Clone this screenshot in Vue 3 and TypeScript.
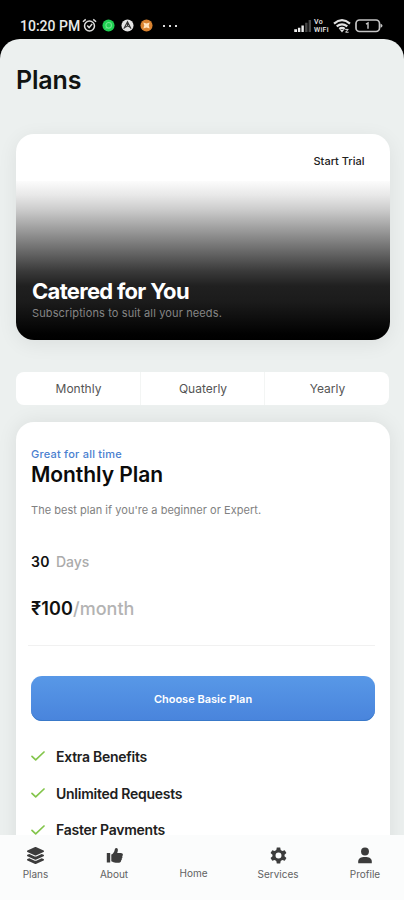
<script setup lang="ts">
const periods: string[] = ['Monthly', 'Quaterly', 'Yearly']

const benefits: string[] = ['Extra Benefits', 'Unlimited Requests', 'Faster Payments']
</script>

<template>
  <main class="phone">
    <header class="status">
      <span class="clock">10:20 PM</span>
      <svg class="alarm" viewBox="0 0 16 16" fill="none" stroke="#ddd" stroke-width="1.6">
        <circle cx="8" cy="8.6" r="5.3" />
        <path d="M1 4 4 1.4M15 4l-3-2.6M5.6 8l2 2.3 3.2-3.8" />
      </svg>
      <svg class="dot green" viewBox="0 0 14 14">
        <circle cx="7" cy="7" r="6.5" fill="#1fd052" />
        <circle cx="7.2" cy="6.8" r="3" fill="none" stroke="#6fe78f" stroke-width="1.2" />
        <path d="m3.6 10.4.8-2.6 1.7 1.8z" fill="#6fe78f" />
      </svg>
      <svg class="dot gray" viewBox="0 0 14 14">
        <circle cx="7" cy="7" r="6.5" fill="#e4e4e4" />
        <path d="M3 10.5 7 3l3.8 7.5M7 3v4.4L4.6 9M7 7.4 9.8 9" fill="none" stroke="#333" stroke-width="1.2" />
      </svg>
      <svg class="dot orange" viewBox="0 0 14 14">
        <circle cx="7" cy="7" r="6.5" fill="#d9822f" />
        <path d="m3.6 3.8 3.4 1 3.4-1-1 3.2 1 3.2-3.4-1-3.400 1 1-3.200z" fill="#ffe2bd" />
      </svg>
      <span class="more"><i></i><i></i><i></i></span>
      <svg class="signal" viewBox="0 0 19 13">
        <path d="M0 10h3v3H0zM4 8.500h2.600V13H4zM7.800 6h2.600v7H7.800z" fill="#eee" />
        <path d="M11.800 3h2.600v10h-2.600zM15.600 0h2.600v13h-2.600z" fill="#484848" />
      </svg>
      <span class="vowifi"><b>Vo</b><b>WiFi</b></span>
      <svg class="wifi" viewBox="0 0 18 14" fill="none" stroke="#e2e2e2" stroke-width="2.200">
        <path d="M1 4.600Q9-2.200 17 4.600M3.700 7.400q5.300-4.200 10.600 0M6.300 10q2.700-2 5.400 0" />
        <path d="m7 11 2 2.600 2-2.600z" fill="#e2e2e2" stroke="none" />
        <path d="M12.200 10.400h3l-2.600 2.800h3" stroke-width="1" />
      </svg>
      <svg class="battery" viewBox="0 0 28 14">
        <rect x="1" y="1" width="23.500" height="11.500" rx="3.500" fill="none" stroke="#c4c4c4" stroke-width="1.700" />
        <path d="M25.500 4.800q2 .4 2 2t-2 2z" fill="#c4c4c4" />
        <path d="M11 5.200 13 4v5.800" fill="none" stroke="#ccc" stroke-width="1.400" />
      </svg>
    </header>

    <section class="screen">
      <h1>Plans</h1>

      <article class="hero">
        <div class="hero-top"><span>Start Trial</span></div>
        <div class="hero-body">
          <h2>Catered for You</h2>
          <p>Subscriptions to suit all your needs.</p>
        </div>
      </article>

      <div class="tabs">
        <button v-for="period in periods" :key="period" type="button">{{ period }}</button>
      </div>

      <article class="plan">
        <p class="tagline">Great for all time</p>
        <h2>Monthly Plan</h2>
        <p class="summary">The best plan if you're a beginner or Expert.</p>
        <p class="days"><strong>30</strong><span>Days</span></p>
        <p class="price"><strong>₹100</strong><span>/month</span></p>
        <hr />
        <button class="choose" type="button">Choose Basic Plan</button>
        <ul>
          <li v-for="benefit in benefits" :key="benefit">
            <svg viewBox="0 0 14 10" fill="none" stroke="#83c54b" stroke-width="1.700" stroke-linecap="round" stroke-linejoin="round">
              <path d="m1 5.300 3.700 3.600L13 1" />
            </svg>
            <span>{{ benefit }}</span>
          </li>
        </ul>
      </article>
    </section>

    <nav>
      <a class="nav-plans">
        <svg viewBox="0 0 512 512" fill="#3c3c3c">
          <path d="M12.400 148l232 105.300c6.900 3.100 16.200 3.100 23.100 0l232-105.300c16.500-7.500 16.500-32.500 0-40l-232-105.300c-6.900-3.100-16.200-3.100-23.100 0L12.400 108c-16.500 7.500-16.500 32.500 0 40zM499.600 236l-58-26.200-161 73.100c-7.600 3.400-15.900 5.100-24.600 5.100s-17-1.700-24.600-5.100L70.500 209.800 12.400 236c-16.500 7.500-16.500 32.500 0 40l232 105.200c6.900 3.100 16.200 3.100 23.100 0L499.600 276c16.500-7.500 16.500-32.500 0-40zM499.600 364l-57.800-26.100-161.200 73c-7.600 3.400-15.900 5.100-24.600 5.100s-17-1.700-24.600-5.100l-161.200-73L12.400 364c-16.500 7.500-16.500 32.500 0 40l232 105.200c6.900 3.100 16.200 3.100 23.100 0L499.600 404c16.500-7.500 16.500-32.500 0-40z" />
        </svg>
        <span>Plans</span>
      </a>
      <a class="nav-about">
        <svg viewBox="0 0 17 16" fill="#3c3c3c">
          <path d="M.8 5.600h3.400V15H.8zM5.300 7.100c1.700-.8 3-2.500 3.400-4.700.2-1.200.7-1.900 1.500-1.900 1.400 0 1.900 1.200 1.600 2.900l-.6 2.100h3.700c1.200 0 2 .8 2 1.800 0 .7-.3 1.100-.7 1.400.4.400.5 1.700-.5 2.300.3.800 0 1.600-.7 2 .1 1.400-.6 2.200-2 2.200H9.700c-1.800 0-2.700-.8-4.400-1.400z" />
        </svg>
        <span>About</span>
      </a>
      <a class="nav-home"><span>Home</span></a>
      <a class="nav-services">
        <svg viewBox="0 0 24 24" fill="#3c3c3c" fill-rule="evenodd">
          <path d="M9.600.8h4.800l.7 3.500 2.300 1.300 3.400-1.100 2.400 4.100-2.700 2.400v2l2.700 2.400-2.400 4.100-3.400-1.100-2.300 1.300-.7 3.500H9.600l-.7-3.500-2.300-1.300-3.400 1.100-2.400-4.100L3.500 13v-2L.8 8.600l2.400-4.100 3.400 1.100 2.300-1.300zM12 7.800a4.200 4.200 0 1 0 0 8.400 4.200 4.200 0 0 0 0-8.400z" />
        </svg>
        <span>Services</span>
      </a>
      <a class="nav-profile">
        <svg viewBox="0 0 16 18" fill="#3c3c3c">
          <circle cx="8" cy="4.700" r="4.200" />
          <path d="M.8 17.300v-1.800C.8 12 3.700 10.500 8 10.500s7.200 1.500 7.200 5v1.800z" />
        </svg>
        <span>Profile</span>
      </a>
    </nav>
  </main>
</template>

<style>
body {
  background: #000;
}
</style>

<style scoped>
* {
  box-sizing: border-box;
}
.phone {
  display: flex;
  flex-direction: column;
  width: 404px;
  height: 900px;
  overflow: hidden;
  background: #000;
  font-family: Inter, 'Liberation Sans', sans-serif;
}
h1,
h2,
p,
ul {
  margin: 0;
  padding: 0;
}
button {
  border: 0;
  padding: 0;
  font-family: inherit;
}
.status {
  display: flex;
  flex: none;
  align-items: center;
  height: 39px;
  padding: 12px 21px 0 20px;
}
.clock {
  width: 62px;
  color: #e9e9e9;
  font: 500 14px/16px Roboto, sans-serif;
  white-space: nowrap;
}
.alarm {
  width: 15px;
  height: 15px;
}
.dot {
  width: 13px;
  height: 13px;
}
.green {
  margin-left: 5px;
}
.gray {
  margin-left: 6px;
}
.orange {
  margin-left: 6px;
}
.more {
  display: flex;
  gap: 4px;
  margin: 0 auto 0 10px;
}
.more i {
  width: 2px;
  height: 2px;
  background: #ddd;
}
.signal {
  width: 18px;
  height: 12px;
}
.vowifi {
  display: flex;
  flex-direction: column;
  width: 17px;
  margin-left: 2px;
  color: #eee;
  font: 500 7px/8px Roboto, sans-serif;
  letter-spacing: 0.3px;
}
.vowifi b {
  font-weight: 500;
}
.wifi {
  width: 18px;
  height: 14px;
  margin-left: 2px;
}
.battery {
  width: 28px;
  height: 14px;
  margin-left: 4px;
}
.screen {
  flex: none;
  height: 796px;
  padding: 25px 14px 0 16px;
  overflow: hidden;
  border-radius: 20px 20px 0 0;
  background: #ecf0ef;
}
h1 {
  height: 70px;
  color: #101312;
  font-size: 25px;
  font-weight: 600;
  line-height: 32px;
  letter-spacing: -0.15px;
}
.hero {
  display: flex;
  flex-direction: column;
  height: 206px;
  overflow: hidden;
  border-radius: 18px;
  background: #fff;
  box-shadow: 0 4px 20px rgba(0, 0, 0, 0.07);
}
.hero-top {
  display: flex;
  justify-content: flex-end;
  height: 47px;
  padding: 19px 25.5px 0 0;
  color: #222;
  font-size: 11px;
  font-weight: 500;
  line-height: 16px;
}
.hero-body {
  flex: 1;
  padding: 96px 16px 0;
  background: linear-gradient(#fcfcfc, #e8e8e8 9%, #ccc 18%, #808080 38%, #393939 57%, #202020 66%, #1b1b1b 76%, #020202 96%, #000);
}
.hero h2 {
  color: #fff;
  font-size: 22px;
  font-weight: 700;
  line-height: 28px;
  letter-spacing: -0.7px;
}
.hero p {
  color: #858585;
  font-size: 11px;
  line-height: 16px;
  letter-spacing: 0.13px;
}
.tabs {
  display: grid;
  grid-template-columns: 125px 124px 1fr;
  height: 33px;
  margin: 32px 1px 17px 0;
  overflow: hidden;
  border-radius: 8px;
  background: #fff;
}
.tabs button {
  padding-left: 1px;
  background: none;
  border-right: 1px solid #f3f5f4;
  color: #555;
  font-size: 12px;
  line-height: 16px;
}
.tabs button:last-child {
  border-right: 0;
}
.plan {
  height: 500px;
  padding: 24px 15px 0;
  border-radius: 18px;
  background: #fff;
  box-shadow: 0 0 20px rgba(0, 0, 0, 0.08);
}
.tagline {
  color: #4a80cf;
  font-size: 11px;
  font-weight: 500;
  line-height: 16px;
  letter-spacing: 0.22px;
}
.plan h2 {
  margin-top: -1px;
  color: #0b0b0b;
  font-size: 21px;
  font-weight: 600;
  line-height: 28px;
  letter-spacing: -0.05px;
}
.summary {
  margin-top: 13px;
  color: #818181;
  font-size: 11px;
  line-height: 16px;
  letter-spacing: 0.03px;
}
.days {
  display: flex;
  gap: 6px;
  margin-top: 34px;
  color: #ababab;
  font-size: 14px;
  font-weight: 500;
  line-height: 20px;
}
.days strong,
.price strong {
  color: #111;
  font-weight: 600;
}
.days strong {
  letter-spacing: 0.4px;
}
.price {
  display: flex;
  margin-top: 25px;
  color: #b3b3b3;
  font-size: 18px;
  font-weight: 500;
  line-height: 24px;
}
.price strong {
  letter-spacing: 0.15px;
}
hr {
  height: 1px;
  margin: 24px 0 30px -3px;
  border: 0;
  background: #f1f1f1;
}
.choose {
  display: block;
  width: 344px;
  height: 45px;
  border-radius: 11px;
  background: linear-gradient(#5898e7, #4984dc);
  box-shadow: inset 0 -1px #3979c9;
  color: #fff;
  font-size: 11px;
  font-weight: 600;
}
ul {
  padding-top: 17px;
  list-style: none;
}
li {
  display: flex;
  align-items: center;
  gap: 11px;
  height: 36.7px;
  color: #202020;
  font-size: 14px;
  font-weight: 600;
  letter-spacing: -0.26px;
  white-space: nowrap;
}
li svg {
  width: 14px;
  height: 10px;
}
nav {
  display: grid;
  flex: none;
  grid-template-columns: 71px 86px 73px 96px 78px;
  height: 65px;
  padding-top: 12px;
  background: #fbfcfc;
}
nav a {
  display: flex;
  flex-direction: column;
  align-items: center;
  gap: 2px;
  color: #626262;
  font-size: 10px;
  line-height: 16px;
}
nav svg {
  width: 17px;
  height: 17px;
}
.nav-home {
  padding-top: 18px;
}
.nav-profile svg {
  width: 16px;
}
</style>
